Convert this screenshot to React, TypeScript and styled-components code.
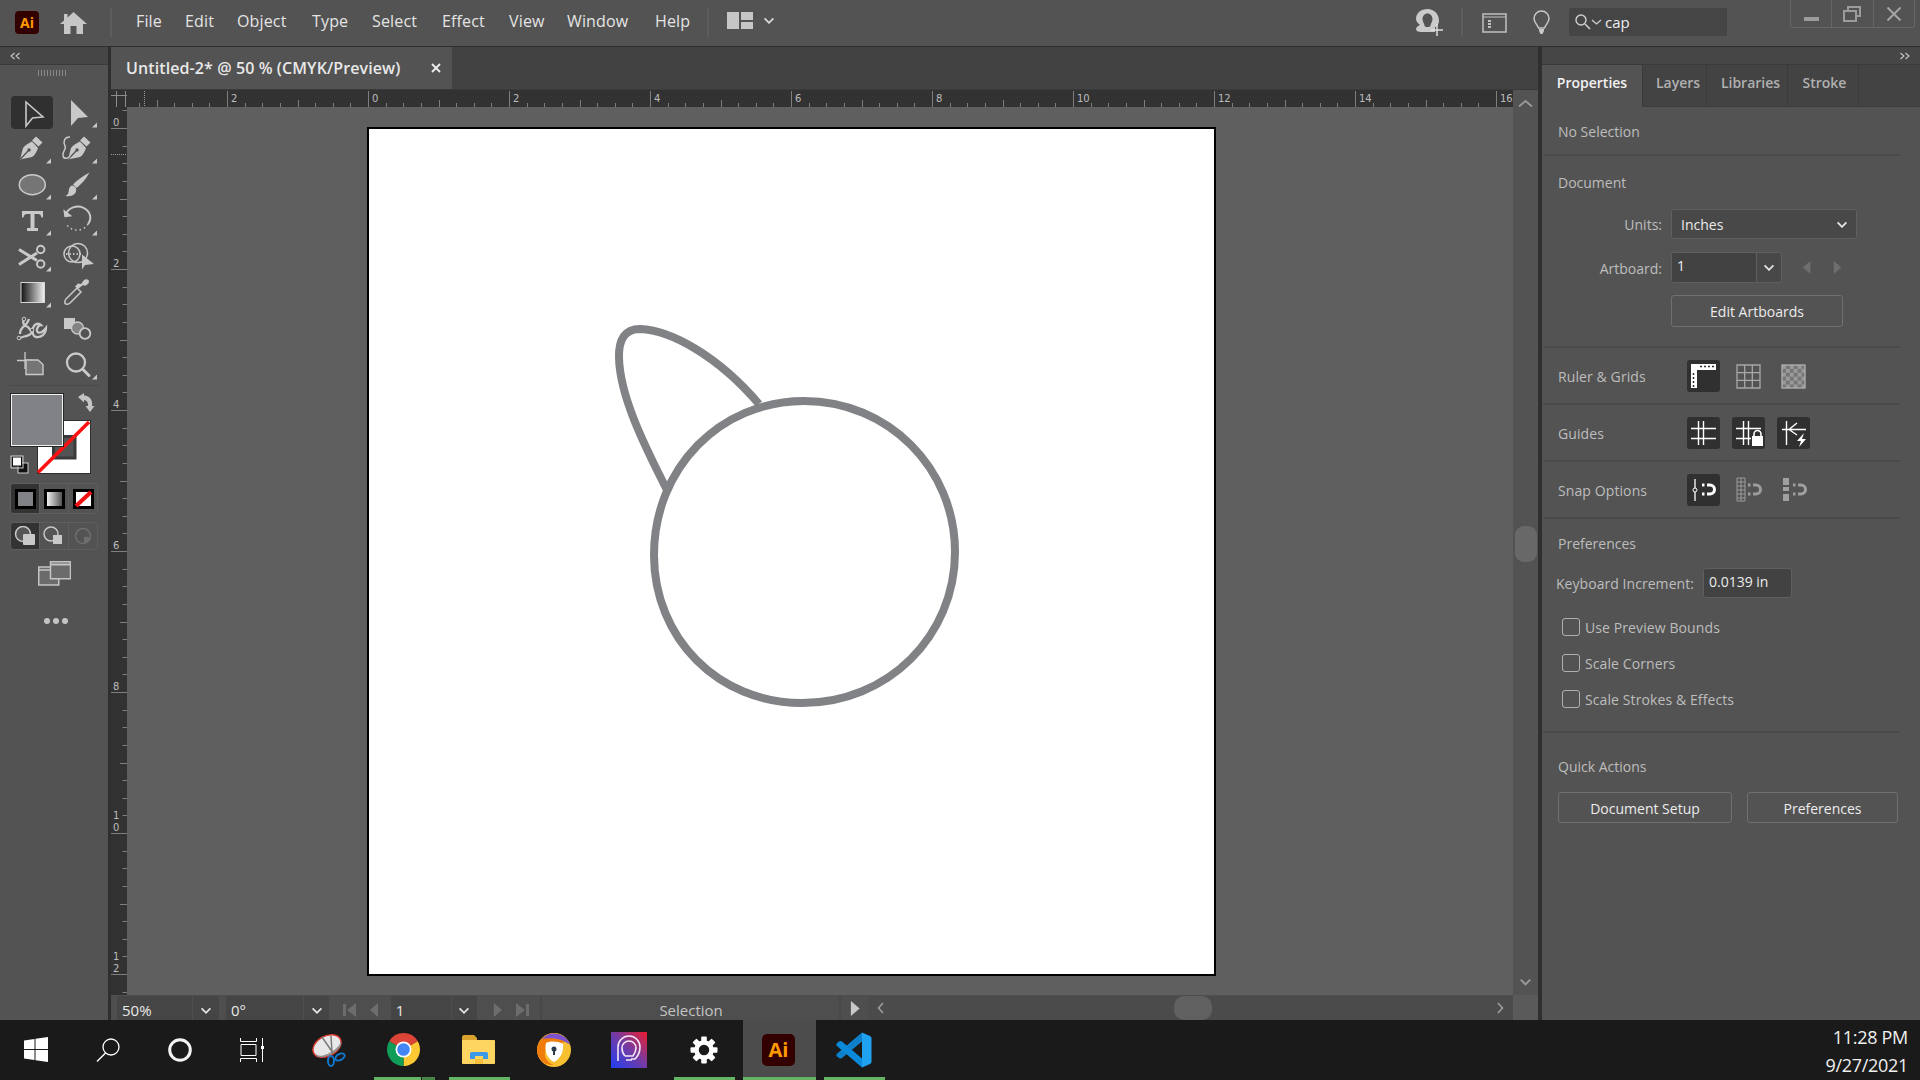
import React from "react";
import styled, { createGlobalStyle } from "styled-components";

const Global = createGlobalStyle`
  html, body { margin: 0; padding: 0; background: #1a1a1a; overflow: hidden; }
  * { box-sizing: border-box; }
  #root { width: 1920px; height: 1080px; font-family: "Open Sans", "Noto Sans", sans-serif; }
  svg { display: block; }
`;

const Page = styled.div`
  width: 1920px; height: 1080px; display: flex; flex-direction: column; background: #535353; overflow: hidden;
`;

/* ---------- top bar ---------- */
const MenuBar = styled.header`
  height: 47px; flex: none; display: flex; align-items: flex-start; background: #535353;
  border-bottom: 1px solid #2e2e2e; padding-left: 15px;
`;
const AppBadge = styled.div`
  width: 24px; height: 23px; margin-top: 11px; border-radius: 4px; background: #330000; color: #ff9a00;
  font: 700 14px/23px "Open Sans", sans-serif; text-align: center; flex: none;
`;
const HomeBtn = styled.div` margin: 12px 0 0 21px; flex: none; `;
const VSep = styled.div<{ $ml: number }>`
  width: 2px; height: 29px; margin: 8px 0 0 ${p => p.$ml}px; background: #5d5d5d; flex: none;
`;
const Menu = styled.nav` display: flex; margin-left: 24px; flex: none; `;
const MenuItem = styled.div<{ $w: number }>`
  width: ${p => p.$w}px; font-size: 16px; line-height: 42px; color: #e4e4e4; letter-spacing: .15px;
`;
const WorkspaceBtn = styled.div` display: flex; align-items: center; gap: 10px; margin: 12px 0 0 18px; flex: none; `;
const Spacer = styled.div` flex: 1; `;
const TopIcon = styled.div<{ $mt: number; $ml: number }>` margin: ${p => p.$mt}px 0 0 ${p => p.$ml}px; flex: none; `;
const SearchBox = styled.div`
  width: 158px; height: 28px; margin: 8px 0 0 19px; background: #454545; border-radius: 3px 0 0 3px;
  display: flex; align-items: center; padding-left: 6px; gap: 3px; color: #eee; font-size: 15px; flex: none;
`;
const WinControls = styled.div`
  width: 125px; height: 28px; margin: 0 5px 0 63px; display: flex; border: 1px solid #666; border-top: 0; border-radius: 0 0 3px 3px; flex: none;
`;
const WinBtn = styled.div`
  flex: 1; display: flex; align-items: center; justify-content: center; & + & { border-left: 1px solid #666; }
`;

/* ---------- workspace ---------- */
const Workspace = styled.main` height: 973px; flex: none; display: flex; background: #2f2f2f; `;

const ToolColumn = styled.aside` width: 108px; margin-right: 3px; flex: none; display: flex; flex-direction: column; background: #535353; `;
const PanelCap = styled.div<{ $end?: boolean }>`
  height: 18px; flex: none; background: #464646; display: flex; align-items: center;
  justify-content: ${p => (p.$end ? "flex-end" : "flex-start")}; padding: 0 10px; border-bottom: 1px solid #3a3a3a;
`;
const Grip = styled.div`
  width: 29px; height: 6px; margin: 5px 0 20px 38px; flex: none;
  background: repeating-linear-gradient(to right, #8a8a8a 0 1px, transparent 1px 3px);
`;
const ToolGrid = styled.div`
  display: grid; grid-template-columns: 42px 42px; grid-auto-rows: 33px; column-gap: 4px; row-gap: 3px; padding-left: 11px;
`;
const ToolCell = styled.div<{ $on?: boolean }>` width: 42px; height: 33px; border-radius: 4px; background: ${p => (p.$on ? "#303030" : "transparent")}; `;
const ToolRule = styled.div` height: 1px; margin: 4px 9px 0; background: #4a4a4a; flex: none; `;
const SwatchWrap = styled.div` margin-top: 4px; height: 90px; flex: none; `;
const ModeRow = styled.div<{ $h: number; $mt: number }>`
  width: 88px; height: ${p => p.$h}px; margin: ${p => p.$mt}px 0 0 10px; display: flex; border: 1px solid #5e5e5e; border-radius: 4px; overflow: hidden; flex: none;
`;
const ModeCell = styled.div<{ $on?: boolean }>`
  flex: 1; display: flex; align-items: center; justify-content: center; background: ${p => (p.$on ? "#333" : "transparent")};
  & + & { border-left: 1px solid #5e5e5e; }
`;
const ScreenMode = styled.div` margin: 11px 0 0 38px; flex: none; `;
const MoreDots = styled.div` margin: 32px 0 0 44px; display: flex; gap: 3px; flex: none; `;
const Dot = styled.i` width: 6px; height: 6px; border-radius: 50%; background: #c4c4c4; display: block; `;

/* ---------- document ---------- */
const DocArea = styled.section`
  width: 1427px; flex: none; display: grid; grid-template-columns: 16px 1386px 25px; grid-template-rows: 43px 17px 888px 25px;
`;
const TabStrip = styled.div` grid-column: 1 / -1; background: #424242; border-bottom: 1px solid #3a3a3a; display: flex; `;
const DocTab = styled.div`
  width: 341px; height: 42px; background: #535353; display: flex; align-items: center; padding-left: 15px; color: #e8e8e8;
  font-size: 16px; font-weight: 600; line-height: 42px; letter-spacing: .1px;
`;
const TabClose = styled.div` margin-left: auto; margin-right: 11px; `;
const RulerCorner = styled.div` background: #323232; `;
const RulerH = styled.div` grid-column: 2 / -1; background: #323232; `;
const RulerV = styled.div` background: #323232; `;
const Canvas = styled.div` background: #5f5f5f; padding: 20px 0 0 240px; overflow: hidden; `;
const Artboard = styled.div` width: 849px; height: 849px; border: 2px solid #000; background: #fff; `;
const VScroll = styled.div` background: #535353; display: flex; flex-direction: column; align-items: center; padding-top: 11px; `;
const VThumb = styled.div` width: 22px; height: 36px; margin-top: 408px; border-radius: 9px; background: #686868; flex: none; `;
const VDown = styled.div` margin-top: 416px; flex: none; `;
const StatusBar = styled.div` grid-column: 1 / 3; background: #4e4e4e; display: flex; align-items: flex-start; padding: 1px 0 0 6px; overflow: hidden; `;
const StatusCorner = styled.div` background: #5a5a5a; `;
const Combo = styled.div<{ $ml: number }>` display: flex; height: 30px; margin-left: ${p => p.$ml}px; flex: none; gap: 1px; `;
const ComboField = styled.div<{ $w: number }>`
  width: ${p => p.$w}px; background: #454545; color: #e8e8e8; font-size: 15px; line-height: 28px; padding-left: 5px; border-radius: 3px 0 0 0;
`;
const ComboDrop = styled.div<{ $w: number }>`
  width: ${p => p.$w}px; background: #454545; border-radius: 0 3px 0 0; display: flex; justify-content: center; padding-top: 11px;
`;
const NavGlyph = styled.div<{ $ml: number }>` margin: 7px 0 0 ${p => p.$ml}px; flex: none; `;
const StatusText = styled.div`
  width: 301px; margin-left: 11px; border-left: 2px solid #484848; border-right: 2px solid #484848; height: 30px; text-align: center;
  color: #c4c4c4; font-size: 15px; line-height: 28px; flex: none; padding-left: 2px;
`;
const PlayBtn = styled.div` width: 27px; height: 24px; display: flex; align-items: center; justify-content: center; flex: none; padding-left: 2px; `;
const HScroll = styled.div` flex: 1; height: 24px; background: #4b4b4b; display: flex; align-items: center; padding-left: 9px; `;
const HThumb = styled.div` width: 38px; height: 24px; margin-left: 290px; border-radius: 10px; background: #606060; flex: none; `;
const HRight = styled.div` margin-left: 285px; flex: none; `;

/* ---------- right panel ---------- */
const RightPanel = styled.aside` width: 378px; margin-left: 4px; flex: none; background: #535353; display: flex; flex-direction: column; `;
const Tabs = styled.div` height: 42px; flex: none; display: flex; background: #434343; border-bottom: 1px solid #3d3d3d; `;
const PanelTab = styled.div<{ $w: number; $on?: boolean; $in?: number }>`
  width: ${p => p.$w}px; height: ${p => (p.$on ? 42 : 41)}px; text-align: center; font-size: 14px; font-weight: 600; line-height: 35px;
  padding-left: ${p => p.$in ?? 0}px;
  background: ${p => (p.$on ? "#535353" : "transparent")}; color: ${p => (p.$on ? "#f2f2f2" : "#b0b0b0")}; border-right: 1px solid #3b3b3b; flex: none;
`;
const Section = styled.div<{ $h: number; $pt?: number; $flat?: boolean }>`
  width: 357px; margin-left: 1px; height: ${p => p.$h}px; flex: none; padding-top: ${p => p.$pt ?? 0}px;
  border-bottom: ${p => (p.$flat ? "0" : "2px solid #4a4a4a")};
`;
const RowSection = styled(Section)` display: flex; align-items: center; padding-left: 15px; `;
const Title = styled.div` margin-left: 15px; font-size: 14px; line-height: 20px; color: #bdbdbd; `;
const RowLabel = styled.div` width: 129px; flex: none; font-size: 14px; color: #bdbdbd; padding-top: 2px; letter-spacing: .1px; `;
const IconRow = styled.div` display: flex; gap: 12px; `;
const IconBtn = styled.div<{ $on?: boolean }>` width: 33px; height: 32px; border-radius: 3px; background: ${p => (p.$on ? "#303030" : "transparent")}; `;
const FormRow = styled.div<{ $mt: number }>` display: flex; align-items: center; margin-top: ${p => p.$mt}px; `;
const FormLabel = styled.div` width: 119px; margin-right: 9px; text-align: right; font-size: 14px; color: #bdbdbd; flex: none; padding-top: 1px; `;
const SelectBox = styled.div`
  width: 186px; height: 30px; border: 1px solid #5f5f5f; border-radius: 3px; background: #484848; display: flex; align-items: center;
  justify-content: space-between; padding: 1px 8px 0 9px; color: #ececec; font-size: 14px;
`;
const ArtCombo = styled.div`
  width: 111px; height: 31px; border: 1px solid #5f5f5f; border-radius: 3px; display: flex; overflow: hidden; flex: none;
`;
const ArtField = styled.div` width: 84px; background: #424242; color: #ececec; font-size: 14px; line-height: 26px; padding-left: 5px; `;
const ArtDrop = styled.div` flex: 1; background: #484848; border-left: 1px solid #5f5f5f; display: flex; align-items: center; justify-content: center; `;
const ArrowPair = styled.div` display: flex; gap: 22px; margin-left: 20px; `;
const OutlineBtn = styled.div<{ $w: number; $h: number }>`
  width: ${p => p.$w}px; height: ${p => p.$h}px; border: 1px solid #707070; border-radius: 3px; text-align: center; color: #ececec;
  font-size: 14px; line-height: ${p => p.$h}px; flex: none;
`;
const BtnIndent = styled.div` margin: 12px 0 0 128px; `;
const KeyRow = styled.div` display: flex; align-items: center; margin: 14px 0 0 13px; `;
const KeyLabel = styled.div` width: 147px; flex: none; font-size: 14px; color: #bdbdbd; white-space: nowrap; letter-spacing: .05px; `;
const KeyInput = styled.div`
  width: 89px; height: 30px; border: 1px solid #5f5f5f; border-radius: 3px; background: #424242; color: #ececec; font-size: 14px; line-height: 26px; padding-left: 5px;
`;
const CheckList = styled.div` margin: 11px 0 0 19px; `;
const CheckRow = styled.div` display: flex; align-items: center; height: 36px; gap: 5px; font-size: 14px; color: #bdbdbd; letter-spacing: .1px; `;
const CheckBox = styled.i` display: block; width: 18px; height: 18px; border: 1px solid #b0b0b0; border-radius: 3px; flex: none; `;
const QuickRow = styled.div` display: flex; gap: 15px; margin: 15px 0 0 15px; `;

/* ---------- taskbar ---------- */
const Taskbar = styled.footer` height: 60px; flex: none; background: #1a1a1a; display: flex; position: relative; `;
const TaskItem = styled.div<{ $w: number; $gap?: number; $hot?: boolean }>`
  width: ${p => p.$w}px; margin-left: ${p => p.$gap ?? 0}px; height: 60px; flex: none; display: flex; flex-direction: column;
  background: ${p => (p.$hot ? "#4c4c4c" : "transparent")};
`;
const TaskIcon = styled.div<{ $nudge?: number }>` flex: 1; display: flex; align-items: center; justify-content: center; padding: 2px ${p => p.$nudge ?? 0}px 0 0; `;
const TaskLine = styled.div<{ $kind?: "on" | "split" }>`
  height: 3px; flex: none;
  background: ${p => (p.$kind === "on" ? "#63b463" : p.$kind === "split" ? "linear-gradient(to right,#63b463 47px,#1a1a1a 47px 48px,#478447 48px)" : "transparent")};
`;
const Clock = styled.div`
  margin-left: auto; margin-right: 12px; width: 110px; padding-top: 3px; text-align: right; color: #f0f0f0; font-size: 18px; line-height: 28px; letter-spacing: -.3px;
`;
const AppBadgeLarge = styled.div`
  width: 33px; height: 32px; border-radius: 5px; background: #330000; color: #ff9a00; font: 700 20px/32px "Open Sans", sans-serif; text-align: center;
`;

/* ---------- drawings ---------- */
const L = "#c9c9c9";
const Corner = () => <path d="M35 31.5H40V26.5Z" fill={L} />;
const Tool = ({ children }: { children: React.ReactNode }) => (
  <svg width="42" height="33" viewBox="0 0 42 33">{children}</svg>
);
const nib = (dx: number) => (
  <g transform={`translate(${dx} 0)`}>
    <path d="M9 27.5L12 16C14 13 18 11 21 9.500L27 16C26 19 24 23 21 25Z" fill={L} />
    <path d="M21 8.500L25 4.500L31.500 10.500L27.500 14.500Z" fill={L} />
    <path d="M9.500 27L17 19" stroke="#535353" strokeWidth="1.300" />
    <circle cx="18" cy="18" r="1.700" fill="#535353" />
  </g>
);
const tools: React.ReactNode[] = [
  <><path d="M15 6L32 21L21.500 22L15 30Z" fill="#333" stroke={L} strokeWidth="1.600" strokeLinejoin="miter" /></>,
  <><path d="M14 4L31 21L21 22L14 30Z" fill={L} /><Corner /></>,
  <>{nib(0)}<Corner /></>,
  <>{nib(2)}<path d="M13 5C7 5 6 10 8 14C10 17 5 19 6 24C7 28 12 26 13 24" fill="none" stroke={L} strokeWidth="1.500" /><Corner /></>,
  <><ellipse cx="21.300" cy="16.700" rx="13" ry="10" fill="#757575" stroke={L} strokeWidth="1.500" /><Corner /></>,
  <><path d="M32.500 4.500C29 11 24 16.500 19.500 20L16 16.500C20 12 26 8 32.500 4.500Z" fill={L} /><path d="M15 17.500C19 18 20.500 22 18 25.500C15.500 28.500 11 28.500 8.500 28C11.500 26.500 11.500 24 12 21.500C12.300 19.500 13.500 18 15 17.500Z" fill={L} /><Corner /></>,
  <><path d="M11 7H32V13.500H30.500C30 11 29 10 27 10H23.500V24H27V27H16V24H19.500V10H16C14 10 13 11 12.500 13.500H11Z" fill={L} /><Corner /></>,
  <><path d="M9 10A12.500 11 0 1 1 31 20" fill="none" stroke={L} strokeWidth="2" /><path d="M7 5V13H15Z" fill={L} transform="rotate(-8 9 10)" /><path d="M31 20A12 11 0 0 1 9 19" fill="none" stroke={L} strokeWidth="1.500" strokeDasharray="1.500 3" /><Corner /></>,
  <><path d="M8 9.500L26 20.500M8 24.500L26 13" stroke={L} strokeWidth="3" /><circle cx="29.700" cy="9.500" r="3.700" fill="none" stroke={L} strokeWidth="2" /><circle cx="29.700" cy="24" r="3.700" fill="none" stroke={L} strokeWidth="2" /><Corner /></>,
  <><circle cx="15" cy="14" r="8" fill="none" stroke={L} strokeWidth="1.500" /><circle cx="21" cy="13" r="9.500" fill="none" stroke={L} strokeWidth="1.500" /><path d="M9 14H24" stroke="#e0e0e0" strokeWidth="1.400" strokeDasharray="1.500 2" /><path d="M25 14.500L37 24L28 25L25 29.500Z" fill={L} /></>,
  <><defs><linearGradient id="gr" x1="0" x2="1" y1="0" y2="0"><stop offset="0" stopColor="#111" /><stop offset="1" stopColor="#f2f2f2" /></linearGradient></defs><rect x="10" y="6.500" width="23.500" height="20" fill="url(#gr)" stroke="#d8d8d8" strokeWidth="1" /><Corner /></>,
  <><path d="M8 27.500C7.500 25 8 24 9 23L20 12L24 16L13 27C11.500 28.500 9 28.500 8 27.500Z" fill="none" stroke={L} strokeWidth="1.500" /><path d="M18 10.500L21 13L26 9C28 11 32 8 32 5.500C32 3.500 29 2.500 27 4C25.500 5.500 26 6 24 8L21 7.500Z" fill={L} /></>,
  <><path d="M13 8C11 10 13 14 17 15L21 20C19 24 15 24 13 24.500C11 25 9 26 8 27M18 7C17 10 15 13 12 15C10 17 9 20 9 22M22 16C24 11 28 11 30 13C28 13 27 14 26 17C25 21 30 23 35 16C35 22 30 26 25 25C22 24.500 21 21 22 16Z" fill="none" stroke={L} strokeWidth="2.300" /><circle cx="8" cy="26" r="1.800" fill="#535353" stroke={L} /><circle cx="21" cy="18" r="1.800" fill="#535353" stroke={L} /><circle cx="13" cy="7" r="1.800" fill="#535353" stroke={L} /></>,
  <><rect x="7" y="6" width="11" height="11" fill={L} /><circle cx="20.500" cy="16" r="6" fill="#838383" stroke={L} strokeWidth="1.300" /><circle cx="28" cy="21.500" r="5.300" fill="#535353" stroke={L} strokeWidth="1.800" /></>,
  <><path d="M6 12.500H22M14 4V21" stroke={L} strokeWidth="1.300" /><path d="M15 12H27L32 16.500V26.500H15Z" fill="#757575" stroke={L} strokeWidth="1.400" /></>,
  <><circle cx="19" cy="14.500" r="9" fill="none" stroke={L} strokeWidth="2.300" /><path d="M25.500 21L32 27.500" stroke={L} strokeWidth="3" strokeLinecap="round" /><Corner /></>,
];

const Chev = ({ c = "#e6e6e6", w = 12 }: { c?: string; w?: number }) => (
  <svg width={w} height={w * 0.65} viewBox="0 0 12 8"><path d="M1.500 1.500L6 6L10.500 1.500" fill="none" stroke={c} strokeWidth="1.800" /></svg>
);
const Tri = ({ dir, c = "#6e6e6e", s = 12 }: { dir: "l" | "r"; c?: string; s?: number }) => (
  <svg width={s * 0.7} height={s} viewBox="0 0 7 12"><path d={dir === "r" ? "M0 0L7 6L0 12Z" : "M7 0L0 6L7 12Z"} fill={c} /></svg>
);
const EndTri = ({ dir }: { dir: "l" | "r" }) => (
  <svg width="13" height="14" viewBox="0 0 13 14">
    <path d={dir === "l" ? "M0 1H3V13H0ZM13 0L4 7L13 14Z" : "M13 1H10V13H13ZM0 0L9 7L0 14Z"} fill="#6c6c6c" />
  </svg>
);
const DoubleChev = ({ dir }: { dir: "l" | "r" }) => (
  <svg width="11" height="8" viewBox="0 0 11 8"><path d={dir === "l" ? "M4.500 1L1 4L4.500 7M9.500 1L6 4L9.500 7" : "M1.500 1L5 4L1.500 7M6.500 1L10 4L6.500 7"} fill="none" stroke="#c8c8c8" strokeWidth="1.100" /></svg>
);
const Magnet = ({ c }: { c: string }) => (
  <path d="M0 0H2.500M5 0H8A4.500 4.500 0 0 1 8 9H5M0 9H2.500" fill="none" stroke={c} strokeWidth="3" />
);

const hTicks = Array.from({ length: 80 }, (_, k) => k - 13).map(i => ({ i, x: 368 + i * 17.625 })).filter(t => t.x > 127 && t.x < 1513);
const vTicks = Array.from({ length: 52 }, (_, k) => k - 1).map(i => ({ i, y: 128 + i * 17.625 })).filter(t => t.y > 107 && t.y < 995);

const HRulerArt = () => (
  <svg width="1411" height="17" viewBox="127 90 1411 17">
    {hTicks.map(({ i, x }) => {
      const major = i % 8 === 0, mid = i % 4 === 0;
      return (
        <g key={i}>
          <path d={`M${Math.round(x) + 0.5} ${major ? 91 : mid ? 100 : 103}V107`} stroke="#7e7e7e" />
          {major && <text x={x + 4} y={102} fontSize="10" fill="#bcbcbc" fontFamily="DejaVu Sans, sans-serif">{Math.abs(i / 4)}</text>}
        </g>
      );
    })}
    <path d="M144.500 91V107" stroke="#9a9a9a" strokeDasharray="1 1" />
    <rect x="1513" y="90" width="25" height="17" fill="#535353" />
    <path d="M1519 106.500L1525.500 101L1532 106.500" fill="none" stroke="#9a9a9a" strokeWidth="1.800" />
  </svg>
);
const VRulerArt = () => (
  <svg width="16" height="888" viewBox="111 107 16 888">
    {vTicks.map(({ i, y }) => {
      const major = i % 8 === 0, mid = i % 4 === 0;
      const digits = String(i / 4).split("");
      return (
        <g key={i}>
          <path d={`M${major ? 111 : mid ? 120 : 122.500} ${Math.round(y) + 0.5}H127`} stroke="#7e7e7e" />
          {major && digits.map((d, n) => (
            <text key={n} x={113} y={y - 2 - (digits.length - 1 - n) * 12} fontSize="10" fill="#bcbcbc" fontFamily="DejaVu Sans, sans-serif">{d}</text>
          ))}
        </g>
      );
    })}
    <path d="M111 154.500H127" stroke="#9a9a9a" strokeDasharray="1 1" />
  </svg>
);

const Swatches = () => (
  <svg width="108" height="90" viewBox="0 390 108 90">
    <rect x="37.500" y="420.500" width="53" height="53" fill="#fff" stroke="#2e2e2e" />
    <path d="M53.500 436.500H75V458H53.500Z" fill="#535353" stroke="#3a3a3a" strokeWidth="3" />
    <path d="M38 472.500L89 422" stroke="#ff1010" strokeWidth="3.500" />
    <rect x="10.500" y="393.500" width="53" height="53" fill="#808285" stroke="#262626" />
    <rect x="11.500" y="394.500" width="51" height="51" fill="none" stroke="#f2f2f2" />
    <path d="M78 397L84 393V395.500C90 396 93 400 92 406H94.500L90 412L85.500 406H88C88.500 403 87 400.500 84 400V402.500Z" fill="#c4c4c4" />
    <rect x="18" y="463" width="10" height="10" fill="#111" stroke="#cfcfcf" />
    <rect x="12.500" y="457" width="9" height="9" fill="#fff" stroke="#111" />
    <rect x="11" y="456" width="12" height="12" fill="none" stroke="#cfcfcf" />
  </svg>
);

const ChromeIcon = () => (
  <svg width="33" height="33" viewBox="-16.500 -16.500 33 33">
    <path d="M-14.300 -8.200A16.500 16.500 0 0 1 14.300 -8.200L0 0Z" fill="#db4437" />
    <path d="M14.300 -8.200A16.500 16.500 0 0 1 0 16.500L0 0Z" fill="#fcc934" />
    <path d="M0 16.500A16.500 16.500 0 0 1 -14.300 -8.200L0 0Z" fill="#0f9d58" />
    <circle r="8" fill="#fff" /><circle r="6.300" fill="#4285f4" />
  </svg>
);
const SnipIcon = () => (
  <svg width="34" height="34" viewBox="0 0 34 34">
    <g transform="rotate(-28 15 13)">
      <ellipse cx="15" cy="13" rx="15" ry="10" fill="#e8e8e8" stroke="#d43a32" strokeWidth="1.500" />
      <path d="M1 15C3 22 26 22 29 15V17C26 24 4 24 1 17Z" fill="#8f8f8f" />
    </g>
    <path d="M10 4L21 20M19 3L20 20" stroke="#7a7a7a" strokeWidth="1.500" />
    <ellipse cx="19" cy="28" rx="3" ry="5" fill="none" stroke="#1177cc" strokeWidth="2" />
    <ellipse cx="28" cy="24" rx="5" ry="3" transform="rotate(-30 28 24)" fill="none" stroke="#1177cc" strokeWidth="2" />
  </svg>
);
const FolderIcon = () => (
  <svg width="34" height="29" viewBox="0 0 34 29">
    <path d="M1 2C1 1 2 0 3 0H13L16 3V6H1Z" fill="#d9a22c" />
    <path d="M1 5H33C33.500 5 34 5.500 34 6V28C34 28.500 33.500 29 33 29H2C1.500 29 1 28.500 1 28Z" fill="#fdd560" />
    <path d="M9 24V19C9 17.500 10 17 11 17H25C26 17 27 17.500 27 19V24H22V21H14V24Z" fill="#3b99e8" />
    <rect x="14" y="24" width="8" height="5" fill="#f7bf3b" />
  </svg>
);
const AvastIcon = () => (
  <svg width="34" height="34" viewBox="-17 -17 34 34">
    <circle r="17" fill="#f7c030" />
    <path d="M-17 0A17 17 0 0 1 14 -9L4 -6C-4 -8 -10 -2 -9 6C-8 10 -4 14 0 15C-10 16 -17 9 -17 0Z" fill="#f07c0c" />
    <path d="M-12 -11A16.500 16.500 0 0 1 16 -5C10 -10 0 -13 -12 -11Z" fill="#7b52d1" />
    <path d="M-8 -7C-3 -9 3 -9 9 -6C10 2 6 9 0 12C-6 9 -10 2 -8 -7Z" fill="#fff" />
    <circle cy="-1" r="2.500" fill="#2c3a4a" /><rect x="-1" y="0" width="2" height="5" fill="#2c3a4a" />
  </svg>
);
const ProtonIcon = () => (
  <svg width="36" height="36" viewBox="0 0 36 36">
    <defs><linearGradient id="pg" x1="0" y1="1" x2="1" y2="0"><stop offset="0" stopColor="#1f40f5" /><stop offset=".55" stopColor="#7a3a9e" /><stop offset="1" stopColor="#ee1c2c" /></linearGradient></defs>
    <rect width="36" height="36" fill="url(#pg)" />
    <path d="M7 29V15A11 11 0 0 1 29 15C29 20 27 24 24 27H20" fill="none" stroke="#f3e8f5" strokeWidth="1.600" />
    <path d="M14 24C11 21 11 18 11 16A7 7 0 0 1 25 16C25 19 24 21 22 24H14M15 28H21" fill="none" stroke="#f3e8f5" strokeWidth="1.600" />
  </svg>
);
const GearIcon = () => (
  <svg width="28" height="28" viewBox="-14 -14 28 28">
    {[0, 45, 90, 135, 180, 225, 270, 315].map(a => <rect key={a} x="-2.800" y="-13.500" width="5.600" height="6" rx="1" fill="#fff" transform={`rotate(${a})`} />)}
    <circle r="7.500" fill="none" stroke="#fff" strokeWidth="4.500" />
  </svg>
);
const VSIcon = () => (
  <svg width="36" height="36" viewBox="0 0 36 36">
    <path d="M26 .5L1.200 21.500C0 22.500 0 23.500 1 24.500L3 26C4 26.800 5 26.800 6 26L26 9.500Z" fill="#0e7fcb" />
    <path d="M3 9.500C4 8.800 5 8.800 6 9.500L26 26.500V35.500L1 14C0 13 0 12 1.200 11Z" fill="#0b8ad9" />
    <path d="M26 .5L34 4C35 4.500 35.500 5.500 35.500 6.500V29.500C35.500 30.500 35 31.500 34 32L26 35.500Z" fill="#1fa3f1" />
  </svg>
);

export default function App() {
  const menus: [string, number][] = [["File", 49], ["Edit", 52], ["Object", 75], ["Type", 60], ["Select", 70], ["Effect", 67], ["View", 58], ["Window", 88], ["Help", 53]];
  return (
    <Page>
      <Global />
      <MenuBar>
        <AppBadge>Ai</AppBadge>
        <HomeBtn>
          <svg width="27" height="22" viewBox="0 0 27 22"><path d="M13.500 0L27 12H23V22H16.500V14H10.500V22H4V12H0L4 8.500V2H7.500V5.400Z" fill="#c6c6c6" /></svg>
        </HomeBtn>
        <VSep $ml={23} />
        <Menu>{menus.map(([t, w]) => <MenuItem key={t} $w={w}>{t}</MenuItem>)}</Menu>
        <VSep $ml={-1} />
        <WorkspaceBtn>
          <svg width="26" height="17" viewBox="0 0 26 17"><path d="M0 0H12V17H0ZM14 0H26V8H14ZM14 10H26V17H14Z" fill="#c6c6c6" /></svg>
          <Chev c="#d8d8d8" />
        </WorkspaceBtn>
        <Spacer />
        <TopIcon $mt={9} $ml={0}>
          <svg width="28" height="27" viewBox="0 0 28 27"><path d="M12.500 0C19 0 24 5 24 11.500C24 14.500 22.500 17 20 18.500V23H6C3 23 1 22 1 20C1 18 3 17 5 16C2.500 14 1 12 1 10C1 4 6 0 12.500 0Z" fill="#cacaca" /><path d="M12.500 4.500C15.500 4.500 17.500 7 17.500 10C17.500 13 15.500 14.500 15.500 16.500C15.500 18.500 9.500 18.500 9.500 16.500C9.500 14.500 7.500 13 7.500 10C7.500 7 9.500 4.500 12.500 4.500Z" fill="#535353" /><path d="M22 15V27M16 21H28" stroke="#e0e0e0" strokeWidth="1.500" /></svg>
        </TopIcon>
        <VSep $ml={18} />
        <TopIcon $mt={13} $ml={19}>
          <svg width="25" height="20" viewBox="0 0 25 20"><rect x="1" y="1" width="23" height="18" fill="none" stroke="#c0c0c0" strokeWidth="1.500" /><path d="M1 4H24" stroke="#c0c0c0" /><path d="M6 7H9V9H6ZM6 10H9V12H6ZM6 13H9V15H6Z" fill="#c0c0c0" /></svg>
        </TopIcon>
        <TopIcon $mt={10} $ml={26}>
          <svg width="17" height="24" viewBox="0 0 17 24"><path d="M8.500 1A7.500 7.500 0 0 0 1 8.500C1 12 4 14 5.500 18H11.500C13 14 16 12 16 8.500A7.500 7.500 0 0 0 8.500 1Z" fill="none" stroke="#c8c8c8" strokeWidth="1.500" /><path d="M6 19H11V21L9.500 24H7.500L6 21Z" fill="#c8c8c8" /></svg>
        </TopIcon>
        <SearchBox>
          <svg width="27" height="16" viewBox="0 0 27 16"><circle cx="6" cy="6" r="5" fill="none" stroke="#cfcfcf" strokeWidth="1.400" /><path d="M10 10L15 15" stroke="#cfcfcf" strokeWidth="1.600" /><path d="M17 6L21.500 10L26 6" fill="none" stroke="#cfcfcf" strokeWidth="1.300" /></svg>
          cap
        </SearchBox>
        <WinControls>
          <WinBtn><svg width="15" height="16" viewBox="0 0 15 16"><rect y="11" width="15" height="4" fill="#9c9c9c" /></svg></WinBtn>
          <WinBtn><svg width="18" height="16" viewBox="0 0 18 16"><path d="M5 4V1H17V10H13M1 5H13V15H1Z" fill="none" stroke="#9c9c9c" strokeWidth="2" /></svg></WinBtn>
          <WinBtn><svg width="16" height="14" viewBox="0 0 16 14"><path d="M1.500 .5L14.500 13.500M14.500 .5L1.500 13.500" stroke="#a6a6a6" strokeWidth="2" /></svg></WinBtn>
        </WinControls>
      </MenuBar>

      <Workspace>
        <ToolColumn>
          <PanelCap><DoubleChev dir="l" /></PanelCap>
          <Grip />
          <ToolGrid>
            {tools.map((t, i) => <ToolCell key={i} $on={i === 0}><Tool>{t}</Tool></ToolCell>)}
          </ToolGrid>
          <ToolRule />
          <SwatchWrap><Swatches /></SwatchWrap>
          <ModeRow $h={31} $mt={3}>
            <ModeCell $on><svg width="21" height="20" viewBox="0 0 21 20"><rect x="1.500" y="1.500" width="18" height="17" fill="#808285" stroke="#000" strokeWidth="3" /></svg></ModeCell>
            <ModeCell><svg width="21" height="20" viewBox="0 0 21 20"><defs><linearGradient id="gm"><stop offset="0" stopColor="#fff" /><stop offset="1" stopColor="#444" /></linearGradient></defs><rect x="1.500" y="1.500" width="18" height="17" fill="url(#gm)" stroke="#000" strokeWidth="3" /></svg></ModeCell>
            <ModeCell><svg width="21" height="20" viewBox="0 0 21 20"><rect x="1.500" y="1.500" width="18" height="17" fill="#fff" stroke="#000" strokeWidth="3" /><path d="M3 17L18 3" stroke="#f01010" strokeWidth="4" /></svg></ModeCell>
          </ModeRow>
          <ModeRow $h={28} $mt={8}>
            <ModeCell $on><svg width="22" height="20" viewBox="0 0 22 20"><circle cx="9" cy="8" r="7.500" fill="#555" stroke="#c8c8c8" strokeWidth="1.500" /><rect x="9" y="8" width="12" height="11" rx="1" fill="#c8c8c8" /></svg></ModeCell>
            <ModeCell><svg width="22" height="20" viewBox="0 0 22 20"><circle cx="8" cy="8" r="7" fill="#555" stroke="#c8c8c8" strokeWidth="1.500" /><path d="M10 9H19V18H10Z" fill="#c8c8c8" /></svg></ModeCell>
            <ModeCell><svg width="20" height="20" viewBox="0 0 20 20"><circle cx="10" cy="10" r="7.500" fill="none" stroke="#6e6e6e" strokeWidth="1.500" /><path d="M11 11H17C17 15 14 17 11 17Z" fill="#6e6e6e" /></svg></ModeCell>
          </ModeRow>
          <ScreenMode>
            <svg width="33" height="25" viewBox="0 0 33 25"><rect x=".75" y="6" width="20" height="18" fill="#6b6b6b" stroke="#c4c4c4" strokeWidth="1.500" /><path d="M1 9H20" stroke="#c4c4c4" strokeWidth="1.500" /><rect x="12.500" y=".75" width="20" height="17" fill="#6b6b6b" stroke="#c4c4c4" strokeWidth="1.500" /><path d="M13 3.500H32" stroke="#c4c4c4" strokeWidth="2" /></svg>
          </ScreenMode>
          <MoreDots><Dot /><Dot /><Dot /></MoreDots>
        </ToolColumn>

        <DocArea>
          <TabStrip>
            <DocTab>
              Untitled-2* @ 50 % (CMYK/Preview)
              <TabClose><svg width="10" height="10" viewBox="0 0 10 10"><path d="M1 1L9 9M9 1L1 9" stroke="#eee" strokeWidth="1.800" /></svg></TabClose>
            </DocTab>
          </TabStrip>
          <RulerCorner>
            <svg width="16" height="17" viewBox="0 0 16 17"><path d="M0 5.500H16M5.500 1V17M14.500 1V17" stroke="#8c8c8c" /></svg>
          </RulerCorner>
          <RulerH><HRulerArt /></RulerH>
          <RulerV><VRulerArt /></RulerV>
          <Canvas>
            <Artboard>
              <svg width="845" height="845" viewBox="369 129 845 845">
                <path d="M666.500 489C642 441 620 395 619 358C618.500 339 625 329 640 329C670 330 717 355 759 404" fill="none" stroke="#808285" strokeWidth="8" />
                <path d="M804 401C888 401 955 468 955 552C955 636 888 703 802 703C718 703 654 638 654 555C654 468 720 401 804 401Z" fill="#fff" stroke="#808285" strokeWidth="8" />
              </svg>
            </Artboard>
          </Canvas>
          <VScroll>
            <VThumb />
            <VDown><Chev c="#9a9a9a" w={13} /></VDown>
          </VScroll>
          <StatusBar>
            <Combo $ml={0}><ComboField $w={75}>50%</ComboField><ComboDrop $w={26}><Chev /></ComboDrop></Combo>
            <Combo $ml={7}><ComboField $w={77}>0°</ComboField><ComboDrop $w={25}><Chev /></ComboDrop></Combo>
            <NavGlyph $ml={14}><EndTri dir="l" /></NavGlyph>
            <NavGlyph $ml={13}><Tri dir="l" s={14} /></NavGlyph>
            <Combo $ml={12}><ComboField $w={60}>1</ComboField><ComboDrop $w={25}><Chev /></ComboDrop></Combo>
            <NavGlyph $ml={16}><Tri dir="r" s={14} /></NavGlyph>
            <NavGlyph $ml={13}><EndTri dir="r" /></NavGlyph>
            <StatusText>Selection</StatusText>
            <PlayBtn><Tri dir="r" c="#c8c8c8" s={15} /></PlayBtn>
            <HScroll>
              <svg width="7" height="12" viewBox="0 0 7 12"><path d="M6 1L1.500 6L6 11" fill="none" stroke="#a0a0a0" strokeWidth="1.500" /></svg>
              <HThumb />
              <HRight><svg width="7" height="12" viewBox="0 0 7 12"><path d="M1 1L5.500 6L1 11" fill="none" stroke="#a0a0a0" strokeWidth="1.500" /></svg></HRight>
            </HScroll>
          </StatusBar>
          <StatusCorner />
        </DocArea>

        <RightPanel>
          <PanelCap $end><DoubleChev dir="r" /></PanelCap>
          <Tabs>
            <PanelTab $w={101} $on>Properties</PanelTab>
            <PanelTab $w={64} $in={7}>Layers</PanelTab>
            <PanelTab $w={81} $in={7}>Libraries</PanelTab>
            <PanelTab $w={71} $in={3}>Stroke</PanelTab>
          </Tabs>
          <Section $h={49} $pt={15}><Title>No Selection</Title></Section>
          <Section $h={192} $pt={17}>
            <Title>Document</Title>
            <FormRow $mt={16}>
              <FormLabel>Units:</FormLabel>
              <SelectBox>Inches<Chev /></SelectBox>
            </FormRow>
            <FormRow $mt={13}>
              <FormLabel>Artboard:</FormLabel>
              <ArtCombo><ArtField>1</ArtField><ArtDrop><Chev /></ArtDrop></ArtCombo>
              <ArrowPair><Tri dir="l" s={13} /><Tri dir="r" s={13} /></ArrowPair>
            </FormRow>
            <BtnIndent><OutlineBtn $w={172} $h={32}>Edit Artboards</OutlineBtn></BtnIndent>
          </Section>
          <RowSection $h={57}>
            <RowLabel>Ruler &amp; Grids</RowLabel>
            <IconRow>
              <IconBtn $on>
                <svg width="33" height="32" viewBox="0 0 33 32"><path d="M4 4H29V10H10V28H4Z" fill="#fff" /><path d="M13 6.500H27M6.500 13V27" stroke="#303030" strokeWidth="1.500" strokeDasharray="2 2" /></svg>
              </IconBtn>
              <IconBtn>
                <svg width="33" height="32" viewBox="0 0 33 32"><path d="M5 5H28V28H5ZM5 12.700H28M5 20.300H28M12.700 5V28M20.300 5V28" fill="none" stroke="#a8a8a8" strokeWidth="1.300" /></svg>
              </IconBtn>
              <IconBtn>
                <svg width="33" height="32" viewBox="0 0 33 32"><defs><pattern id="ck" width="7.800" height="7.800" patternUnits="userSpaceOnUse" x="5" y="5"><rect width="7.800" height="7.800" fill="#767676" /><rect width="3.900" height="3.900" fill="#9a9a9a" /><rect x="3.900" y="3.900" width="3.900" height="3.900" fill="#9a9a9a" /></pattern></defs><rect x="5" y="5" width="23" height="23" fill="url(#ck)" stroke="#b0b0b0" strokeWidth="1.300" /></svg>
              </IconBtn>
            </IconRow>
          </RowSection>
          <RowSection $h={57}>
            <RowLabel>Guides</RowLabel>
            <IconRow>
              <IconBtn $on><svg width="33" height="32" viewBox="0 0 33 32"><path d="M4 11.500H29M4 21.500H29M11.500 4V28M16.500 4V28" stroke="#fff" strokeWidth="1.400" /></svg></IconBtn>
              <IconBtn $on><svg width="33" height="32" viewBox="0 0 33 32"><path d="M4 11.500H29M4 21.500H19M11.500 4V28M16.500 4V28" stroke="#fff" strokeWidth="1.400" /><rect x="20" y="19" width="11" height="10" fill="#fff" /><path d="M22 19V17A3.500 3.500 0 0 1 29 17V19" fill="none" stroke="#fff" strokeWidth="1.600" /></svg></IconBtn>
              <IconBtn $on><svg width="33" height="32" viewBox="0 0 33 32"><path d="M9.500 4V28M5 12.500H29M20 6L12 12.500L20 18" fill="none" stroke="#fff" strokeWidth="1.400" /><path d="M27 16L20 24H24L22 30L29 22H25Z" fill="#fff" /></svg></IconBtn>
            </IconRow>
          </RowSection>
          <RowSection $h={57}>
            <RowLabel>Snap Options</RowLabel>
            <IconRow>
              <IconBtn $on>
                <svg width="33" height="32" viewBox="0 0 33 32"><path d="M8 5V27" stroke="#fff" strokeWidth="1.300" /><circle cx="8" cy="16" r="2" fill="#303030" stroke="#fff" /><g transform="translate(15 11)"><Magnet c="#fff" /></g></svg>
              </IconBtn>
              <IconBtn>
                <svg width="33" height="32" viewBox="0 0 33 32"><path d="M5 4H13V27H5ZM5 8H13M5 12H13M5 16H13M5 20H13M5 24H13M9 4V27" fill="none" stroke="#9c9c9c" strokeWidth="1" /><g transform="translate(16 11)"><Magnet c="#9c9c9c" /></g></svg>
              </IconBtn>
              <IconBtn>
                <svg width="33" height="32" viewBox="0 0 33 32"><rect x="6" y="4" width="6" height="7" fill="#a0a0a0" /><rect x="6" y="13" width="6" height="4" fill="#a0a0a0" /><rect x="6" y="20" width="6" height="7" fill="#a0a0a0" /><g transform="translate(16 11)"><Magnet c="#a0a0a0" /></g></svg>
              </IconBtn>
            </IconRow>
          </RowSection>
          <Section $h={214} $pt={15}>
            <Title>Preferences</Title>
            <KeyRow>
              <KeyLabel>Keyboard Increment:</KeyLabel>
              <KeyInput>0.0139 in</KeyInput>
            </KeyRow>
            <CheckList>
              <CheckRow><CheckBox />Use Preview Bounds</CheckRow>
              <CheckRow><CheckBox />Scale Corners</CheckRow>
              <CheckRow><CheckBox />Scale Strokes &amp; Effects</CheckRow>
            </CheckList>
          </Section>
          <Section $h={100} $pt={24} $flat>
            <Title>Quick Actions</Title>
            <QuickRow>
              <OutlineBtn $w={174} $h={31}>Document Setup</OutlineBtn>
              <OutlineBtn $w={151} $h={31}>Preferences</OutlineBtn>
            </QuickRow>
          </Section>
        </RightPanel>
      </Workspace>

      <Taskbar>
        <TaskItem $w={72}><TaskIcon>
          <svg width="24" height="25" viewBox="0 0 24 25"><path d="M0 3.500L10.500 2V12H0ZM11.500 1.800L24 0V12H11.500ZM0 13H10.500V23L0 21.500ZM11.500 13H24V25L11.500 23.200Z" fill="#fff" /></svg>
        </TaskIcon><TaskLine /></TaskItem>
        <TaskItem $w={72}><TaskIcon>
          <svg width="24" height="24" viewBox="0 0 24 24"><circle cx="15" cy="9" r="8" fill="none" stroke="#fff" strokeWidth="1.300" /><path d="M9.500 15L1 23.500" stroke="#fff" strokeWidth="1.400" /></svg>
        </TaskIcon><TaskLine /></TaskItem>
        <TaskItem $w={72}><TaskIcon>
          <svg width="24" height="24" viewBox="0 0 24 24"><circle cx="12" cy="12" r="10.300" fill="none" stroke="#f4f4f4" strokeWidth="3" /></svg>
        </TaskIcon><TaskLine /></TaskItem>
        <TaskItem $w={72}><TaskIcon>
          <svg width="24" height="24" viewBox="0 0 24 24"><path d="M0.500 0V3.500H16.500V0M1 6.500H16V17.500H1ZM0.500 24V20.500H16.500V24M22.500 0V24" fill="none" stroke="#fff" strokeWidth="1" /><rect x="21" y="8" width="3" height="3" fill="#fff" /></svg>
        </TaskIcon><TaskLine /></TaskItem>
        <TaskItem $w={82}><TaskIcon><SnipIcon /></TaskIcon><TaskLine /></TaskItem>
        <TaskItem $w={61} $gap={4}><TaskIcon $nudge={2}><ChromeIcon /></TaskIcon><TaskLine $kind="split" /></TaskItem>
        <TaskItem $w={61} $gap={14}><TaskIcon $nudge={4}><FolderIcon /></TaskIcon><TaskLine $kind="on" /></TaskItem>
        <TaskItem $w={61} $gap={13}><TaskIcon><AvastIcon /></TaskIcon><TaskLine /></TaskItem>
        <TaskItem $w={62} $gap={14}><TaskIcon><ProtonIcon /></TaskIcon><TaskLine /></TaskItem>
        <TaskItem $w={61} $gap={14}><TaskIcon $nudge={2}><GearIcon /></TaskIcon><TaskLine $kind="on" /></TaskItem>
        <TaskItem $w={73} $gap={8} $hot><TaskIcon $nudge={2}><AppBadgeLarge>Ai</AppBadgeLarge></TaskIcon><TaskLine $kind="on" /></TaskItem>
        <TaskItem $w={61} $gap={8}><TaskIcon $nudge={2}><VSIcon /></TaskIcon><TaskLine $kind="on" /></TaskItem>
        <Clock>11:28 PM<br />9/27/2021</Clock>
      </Taskbar>
    </Page>
  );
}
